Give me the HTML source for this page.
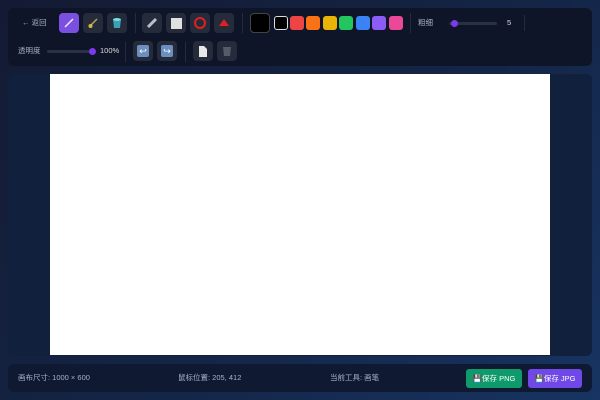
<!DOCTYPE html><html><head><meta charset="utf-8"><style>
*{margin:0;padding:0;box-sizing:border-box}
body{width:600px;height:400px;overflow:hidden;background:linear-gradient(135deg,#141a33 0%,#142444 50%,#173462 100%);font-family:"Liberation Sans","Noto Sans CJK SC",sans-serif;color:#cbd2e0;position:relative}
.p{position:absolute;background:#0f1529;border-radius:6px}
.a{position:absolute}
.b{position:absolute;width:20px;height:20px;border-radius:4px;background:#252b3b;display:flex;align-items:center;justify-content:center}
.sep{position:absolute;width:1px;height:20px;background:#252b3e}
.c{position:absolute;top:16px;width:14px;height:14px;border-radius:3px}
.t{position:absolute;font-size:7.5px;line-height:10px;color:#aab1c2}
</style></head><body>
<div class="p" style="left:8px;top:8px;width:584px;height:58px"></div>
<div class="t" style="left:22px;top:18px">← 返回</div>
<div class="b" style="left:59px;top:13px;background:#7b4fe0"><svg width="14" height="14"><line x1="3" y1="11" x2="11" y2="3" stroke="#f0e8ff" stroke-width="1.5"/></svg></div>
<div class="b" style="left:83px;top:13px"><svg width="14" height="14"><line x1="5" y1="9" x2="11" y2="3" stroke="#b8a060" stroke-width="1.5"/><circle cx="4.5" cy="10" r="2" fill="#d8b840"/></svg></div>
<div class="b" style="left:107px;top:13px"><svg width="14" height="14"><path d="M3 3h8l-1 9H4z" fill="#3aa0b8"/><ellipse cx="7" cy="3.5" rx="4" ry="1.5" fill="#7dd"/></svg></div>
<div class="sep" style="left:135px;top:13px"></div>
<div class="b" style="left:142px;top:13px"><svg width="14" height="14"><line x1="3" y1="11" x2="11" y2="3" stroke="#b8c0d0" stroke-width="3"/></svg></div>
<div class="b" style="left:166px;top:13px"><div style="width:11px;height:11px;background:#e0e0e0"></div></div>
<div class="b" style="left:190px;top:13px"><div style="width:12px;height:12px;border:2.5px solid #e02020;border-radius:50%"></div></div>
<div class="b" style="left:214px;top:13px"><svg width="14" height="14"><path d="M7 3L12 10H2z" fill="#e02020"/></svg></div>
<div class="sep" style="left:242px;top:13px"></div>
<div class="a" style="left:250px;top:13px;width:20px;height:20px;background:#000;border:1.5px solid #444;border-radius:4px"></div>
<div class="c" style="left:274px;background:#000;border:1.5px solid #ddd"></div>
<div class="c" style="left:290px;background:#ef4444"></div>
<div class="c" style="left:306px;background:#f97316"></div>
<div class="c" style="left:323px;background:#eab308"></div>
<div class="c" style="left:339px;background:#22c55e"></div>
<div class="c" style="left:356px;background:#3b82f6"></div>
<div class="c" style="left:372px;background:#8b5cf6"></div>
<div class="c" style="left:389px;background:#ec4899"></div>
<div class="sep" style="left:410px;top:13px"></div>
<div class="t" style="left:418px;top:18px">粗细</div>
<div class="a" style="left:449px;top:22px;width:48px;height:3px;background:#2a3145;border-radius:2px"></div>
<div class="a" style="left:451px;top:20px;width:7px;height:7px;background:#7c3aed;border-radius:50%"></div>
<div class="t" style="left:507px;top:18px;color:#ddd">5</div>
<div class="sep" style="left:524px;top:15px;height:16px"></div>
<div class="t" style="left:18px;top:46px">透明度</div>
<div class="a" style="left:47px;top:50px;width:46px;height:3px;background:#2a3145;border-radius:2px"></div>
<div class="a" style="left:89px;top:48px;width:7px;height:7px;background:#7c3aed;border-radius:50%"></div>
<div class="t" style="left:100px;top:46px;color:#ddd">100%</div>
<div class="sep" style="left:125px;top:42px"></div>
<div class="b" style="left:133px;top:41px"><div style="width:12px;height:12px;background:#6a8fc0;border-radius:2px;color:#fff;font-size:9px;line-height:12px;text-align:center">↩</div></div>
<div class="b" style="left:157px;top:41px"><div style="width:12px;height:12px;background:#6a8fc0;border-radius:2px;color:#fff;font-size:9px;line-height:12px;text-align:center">↪</div></div>
<div class="sep" style="left:185px;top:42px"></div>
<div class="b" style="left:193px;top:41px"><svg width="14" height="14"><path d="M3 2h5l3 3v8H3z" fill="#e8e8e8"/></svg></div>
<div class="b" style="left:217px;top:41px"><svg width="14" height="14"><path d="M3 3h8l-1 9H4z" fill="#555b68"/></svg></div>
<div class="p" style="left:8px;top:74px;width:584px;height:282px;background:#10203d"></div>
<div class="a" style="left:50px;top:74px;width:500px;height:281px;background:#fff"></div>
<div class="p" style="left:8px;top:364px;width:584px;height:28px;background:#0f1a32"></div>
<div class="t" style="left:18px;top:373px">画布尺寸: 1000 × 600</div>
<div class="t" style="left:178px;top:373px">鼠标位置: 205, 412</div>
<div class="t" style="left:330px;top:373px">当前工具: 画笔</div>
<div class="a" style="left:466px;top:369px;width:56px;height:19px;background:#0f9a6c;border-radius:3px;color:#fff;font-size:7.5px;line-height:19px;text-align:center">💾保存 PNG</div>
<div class="a" style="left:528px;top:369px;width:54px;height:19px;background:#7048e8;border-radius:3px;color:#fff;font-size:7.5px;line-height:19px;text-align:center">💾保存 JPG</div>
</body></html>
